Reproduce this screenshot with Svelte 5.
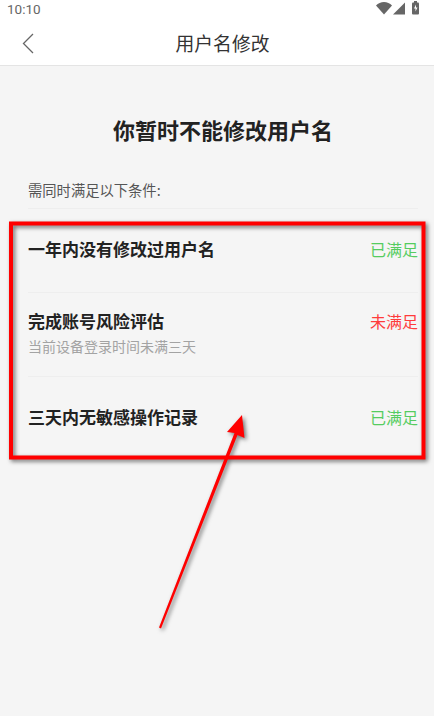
<script lang="ts">
	const conditions = [
		{ title: '一年内没有修改过用户名', status: '已满足', ok: true, note: '' },
		{ title: '完成账号风险评估', status: '未满足', ok: false, note: '当前设备登录时间未满三天' },
		{ title: '三天内无敏感操作记录', status: '已满足', ok: true, note: '' }
	];
</script>

<div class="page">
	<div class="status-bar">
		<span class="time">10:10</span>
		<svg class="status-icons" width="46" height="16" viewBox="0 0 46 16">
			<path d="M0 5.500C2 3.500 5 2 8 2s6 1.500 8 3.500L8 14.500z" fill="#666" />
			<path d="M17 14.500L29 2.500v12z" fill="#666" />
			<rect x="36" y="2.500" width="7" height="12" rx="1" fill="#666" />
			<rect x="38" y="1" width="3" height="2" fill="#666" />
			<path d="M40 4.500l-2 4h1.500v3l2-4H40z" fill="#fff" />
		</svg>
	</div>

	<header class="nav">
		<svg class="back" width="14" height="22" viewBox="0 0 14 22">
			<path d="M12 2L2.500 11.500 12 21" fill="none" stroke="#666" stroke-width="1.300" />
		</svg>
		<span class="nav-title">用户名修改</span>
	</header>

	<main class="content">
		<h1>你暂时不能修改用户名</h1>
		<p class="hint">需同时满足以下条件:</p>
		<ul>
			{#each conditions as c}
				<li>
					<div class="cond-head">
						<span class="cond-title">{c.title}</span>
						<span class={c.ok ? 'status ok' : 'status bad'}>{c.status}</span>
					</div>
					{#if c.note}
						<div class="cond-note">{c.note}</div>
					{/if}
				</li>
			{/each}
		</ul>
	</main>

	<!-- red markup drawn over the screenshot -->
	<svg class="markup" width="434" height="716" viewBox="0 0 434 716">
		<rect x="11" y="223.500" width="412.500" height="234" fill="none" stroke="#f00" stroke-width="4" />
		<path d="M159 627.500L234.500 433 227 432 242 415 244.500 438 237.500 435 161 628.500z" fill="#f00" />
	</svg>
</div>

<style>
	:global(body) {
		margin: 0;
		background: #f5f5f5;
	}

	.page {
		position: relative;
		width: 434px;
		height: 716px;
		overflow: hidden;
		background: #f5f5f5;
		font-family: 'Noto Sans CJK SC', 'Noto Sans', sans-serif;
	}

	.status-bar {
		display: flex;
		justify-content: space-between;
		align-items: flex-start;
		height: 18px;
		padding: 0 12px 0 7px;
		background: #fff;
	}

	.time {
		font-family: Roboto, sans-serif;
		font-size: 13.500px;
		line-height: 18px;
		color: #666;
	}

	.status-icons {
		display: block;
	}

	.nav {
		position: relative;
		display: flex;
		align-items: center;
		justify-content: center;
		height: 47px;
		background: #fff;
		border-bottom: 1px solid #e4e4e4;
	}

	.back {
		position: absolute;
		left: 21px;
		top: 14px;
	}

	.nav-title {
		font-size: 18.800px;
		line-height: 26px;
		color: #333;
		margin-top: 3px;
		margin-left: 11px;
	}

	.content {
		padding: 0 16px 0 28px;
	}

	h1 {
		margin: 0;
		padding-top: 47px;
		font-size: 22px;
		line-height: 32px;
		font-weight: 700;
		text-align: center;
		color: #222;
	}

	.hint {
		margin: 0;
		padding: 35px 0 8px;
		font-size: 14.300px;
		line-height: 20px;
		color: #555;
	}

	ul {
		margin: 0;
		padding: 0;
		list-style: none;
		border-top: 1px solid #eeeeee;
	}

	li {
		display: flex;
		flex-direction: column;
		justify-content: center;
		box-sizing: border-box;
		height: 84px;
		padding-bottom: 4px;
		border-bottom: 1px solid #eeeeee;
	}

	li:last-child {
		border-bottom: none;
	}

	.cond-head {
		display: flex;
		justify-content: space-between;
	}

	.cond-title {
		font-size: 17px;
		line-height: 24px;
		font-weight: 700;
		color: #222;
	}

	.cond-note {
		margin-top: 3px;
		font-size: 14px;
		line-height: 20px;
		color: #a3a3a3;
	}

	.status {
		font-size: 16px;
		line-height: 24px;
	}

	.ok {
		color: #55cc60;
	}

	.bad {
		color: #ff3b3b;
	}

	.markup {
		position: absolute;
		left: 0;
		top: 0;
		filter: drop-shadow(2px 2px 2px rgba(0, 0, 0, 0.55));
	}
</style>
